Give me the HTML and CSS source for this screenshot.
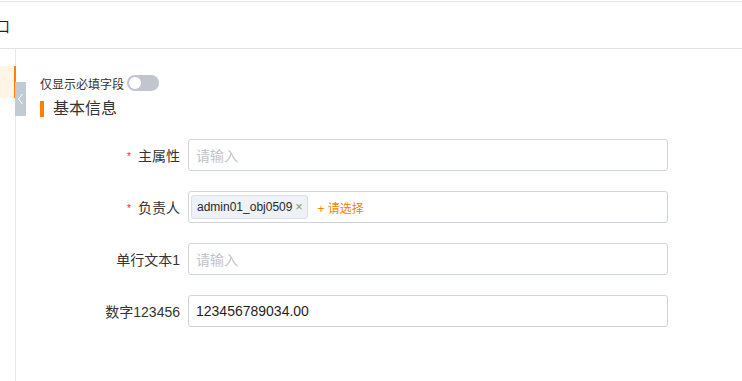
FILE: index.html
```html
<!DOCTYPE html>
<html>
<head>
    <meta charset="UTF-8">
    <meta name="viewport" content="width=device-width, initial-scale=1">
    <title>基本信息</title>
    <link rel="stylesheet" href="styles.css">
</head>
<body>
    <div class="header">
        <span class="header-title">新建对象口</span>
    </div>
    <div class="main">
        <div class="sidebar">
            <div class="side-item active"></div>
            <div class="collapse-btn">
                <svg width="7" height="12" viewBox="0 0 7 12"><path d="M5.5 1 L1.5 6 L5.5 11" fill="none" stroke="#fff" stroke-width="1"/></svg>
            </div>
        </div>
        <div class="content">
            <div class="toggle-row">
                <span>仅显示必填字段</span>
                <span class="switch"><span class="knob"></span></span>
            </div>
            <div class="section-title">基本信息</div>
            <div class="form">
                <div class="form-row">
                    <label class="form-label"><span class="req">*</span>主属性</label>
                    <div class="input placeholder">请输入</div>
                </div>
                <div class="form-row">
                    <label class="form-label"><span class="req">*</span>负责人</label>
                    <div class="input select">
                        <span class="tag">admin01_obj0509<span class="tag-close">×</span></span>
                        <span class="add-link">+ 请选择</span>
                    </div>
                </div>
                <div class="form-row">
                    <label class="form-label">单行文本1</label>
                    <div class="input placeholder">请输入</div>
                </div>
                <div class="form-row">
                    <label class="form-label">数字123456</label>
                    <div class="input">123456789034.00</div>
                </div>
            </div>
        </div>
    </div>
</body>
</html>
```

FILE: styles.css
```css
body {
    margin: 0;
    background-color: #fff;
    font-family: "Liberation Sans", "Noto Sans CJK SC", sans-serif;
    color: #333;
    overflow: hidden;
}
.header {
    margin-top: 1px;
    height: 46px;
    border-top: 1px solid #e3e3e3;
    border-bottom: 1px solid #e3e3e3;
    display: flex;
    align-items: center;
    overflow: hidden;
}
.header-title {
    margin-left: -65px;
    font-size: 15px;
    color: #222;
    white-space: nowrap;
}
.main {
    display: flex;
    position: relative;
    height: 332px;
}
.sidebar {
    width: 15px;
    border-right: 1px solid #e8e8e8;
    flex-shrink: 0;
}
.side-item {
    height: 32px;
}
.side-item.active {
    margin-top: 17px;
    width: 16px;
    background-color: #fef5e6;
    box-shadow: inset -2px 0 0 #ff8000;
}
.collapse-btn {
    position: absolute;
    left: 15px;
    top: 33px;
    width: 11px;
    height: 34px;
    background-color: #c2cad3;
    display: flex;
    align-items: center;
    justify-content: center;
}
.content {
    padding: 25px 0 0 24px;
}
.toggle-row {
    display: flex;
    align-items: center;
    gap: 3px;
    font-size: 12px;
    height: 18px;
    color: #333;
}
.switch {
    width: 32px;
    height: 16px;
    border-radius: 8px;
    background-color: #c1c5cd;
    display: flex;
    align-items: center;
    padding-left: 2px;
    box-sizing: border-box;
}
.knob {
    width: 12px;
    height: 12px;
    border-radius: 50%;
    background-color: #fff;
}
.section-title {
    margin-top: 9px;
    border-left: 4px solid #ff8000;
    padding-left: 9px;
    height: 16px;
    line-height: 16px;
    font-size: 16px;
    color: #333;
}
.form {
    margin-top: 22px;
    display: flex;
    flex-direction: column;
    gap: 20px;
}
.form-row {
    display: flex;
    align-items: center;
    gap: 8px;
}
.form-label {
    width: 140px;
    text-align: right;
    font-size: 14px;
    color: #333;
}
.req {
    color: #f5222d;
    font-size: 10px;
    margin-right: 7px;
    vertical-align: 1px;
}
.input {
    width: 480px;
    height: 32px;
    box-sizing: border-box;
    border: 1px solid #cfd3da;
    border-radius: 3px;
    padding: 0 7px;
    display: flex;
    align-items: center;
    font-size: 14px;
    color: #1f1f1f;
}
.input.placeholder {
    color: #c0c4cc;
}
.input.select {
    padding-left: 2px;
    gap: 9px;
}
.tag {
    height: 24px;
    box-sizing: border-box;
    border: 1px solid #dcdfe6;
    border-radius: 3px;
    background-color: #eef1f6;
    padding: 0 5px;
    display: flex;
    align-items: center;
    font-size: 12px;
    color: #2a2a2a;
}
.tag-close {
    margin-left: 3px;
    color: #888;
    font-size: 12px;
}
.add-link {
    font-size: 12px;
    color: #ff8000;
}
```
